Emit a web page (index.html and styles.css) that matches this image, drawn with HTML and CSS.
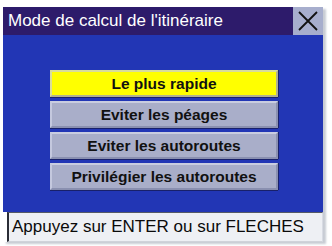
FILE: index.html
```html
<!DOCTYPE html>
<html>
<head>
<meta charset="utf-8">
<link rel="stylesheet" href="styles.css">
</head>
<body>
<div class="window">
  <div class="titlebar">
    <div class="title">Mode de calcul de l'itinéraire</div>
    <div class="close">
      <svg width="22" height="22" viewBox="0 0 22 22"><path d="M2 2 L20 20 M20 2 L2 20" stroke="#111" stroke-width="1.8" fill="none"/></svg>
    </div>
  </div>
  <div class="content">
    <div class="menu">
      <div class="btn selected">Le plus rapide</div>
      <div class="btn">Eviter les péages</div>
      <div class="btn">Eviter les autoroutes</div>
      <div class="btn">Privilégier les autoroutes</div>
    </div>
  </div>
  <div class="status">Appuyez sur ENTER ou sur FLECHES</div>
</div>
</body>
</html>
```
FILE: styles.css
```css
html, body {
  margin: 0;
  padding: 0;
  background: #ffffff;
}
body {
  width: 332px;
  height: 246px;
  overflow: hidden;
  font-family: "Liberation Sans", Arial, sans-serif;
}
.window {
  margin: 7px 0 0 3px;
  width: 320px;
  display: flex;
  flex-direction: column;
  box-shadow: 3px 2px 2px #c8ccd4;
}
.titlebar {
  height: 28px;
  background: #2d1b6b;
  display: flex;
  align-items: center;
}
.title {
  flex: 1;
  color: #ffffff;
  font-size: 17px;
  padding-left: 5px;
  white-space: nowrap;
}
.close {
  width: 30px;
  height: 28px;
  background: #a7aecd;
  display: flex;
  align-items: center;
  justify-content: center;
}
.close svg { display: block; }
.content {
  height: 177px;
  background: #2236b5;
  display: flex;
  flex-direction: column;
}
.menu {
  margin: 35px 0 0 47px;
  width: 228px;
  display: flex;
  flex-direction: column;
  gap: 4px;
}
.btn {
  box-sizing: border-box;
  height: 27px;
  background: #a9aec9;
  border-top: 2px solid #c9cde0;
  border-left: 2px solid #c4c8de;
  border-right: 2px solid #8a90b0;
  border-bottom: 2px solid #8a90b0;
  box-shadow: 0 1px 0 #18206a, 1px 0 0 #18206a;
  color: #111111;
  font-weight: bold;
  font-size: 15.5px;
  display: flex;
  align-items: center;
  justify-content: center;
  white-space: nowrap;
}
.btn.selected {
  background: #ffff00;
  border-top-color: #d8dc9a;
  border-left-color: #d8dc9a;
  border-right-color: #b0b090;
  border-bottom-color: #b0b090;
}
.status {
  box-sizing: border-box;
  height: 30px;
  margin-left: 4px;
  background: #eef0f4;
  border-top: 1px solid #555a66;
  border-left: 2px solid #2a2d36;
  border-right: 1px solid #d8dbe3;
  border-bottom: 1px solid #d0d3da;
  color: #0a0a0a;
  font-size: 17px;
  display: flex;
  align-items: center;
  padding-left: 3px;
  white-space: nowrap;
}
```
